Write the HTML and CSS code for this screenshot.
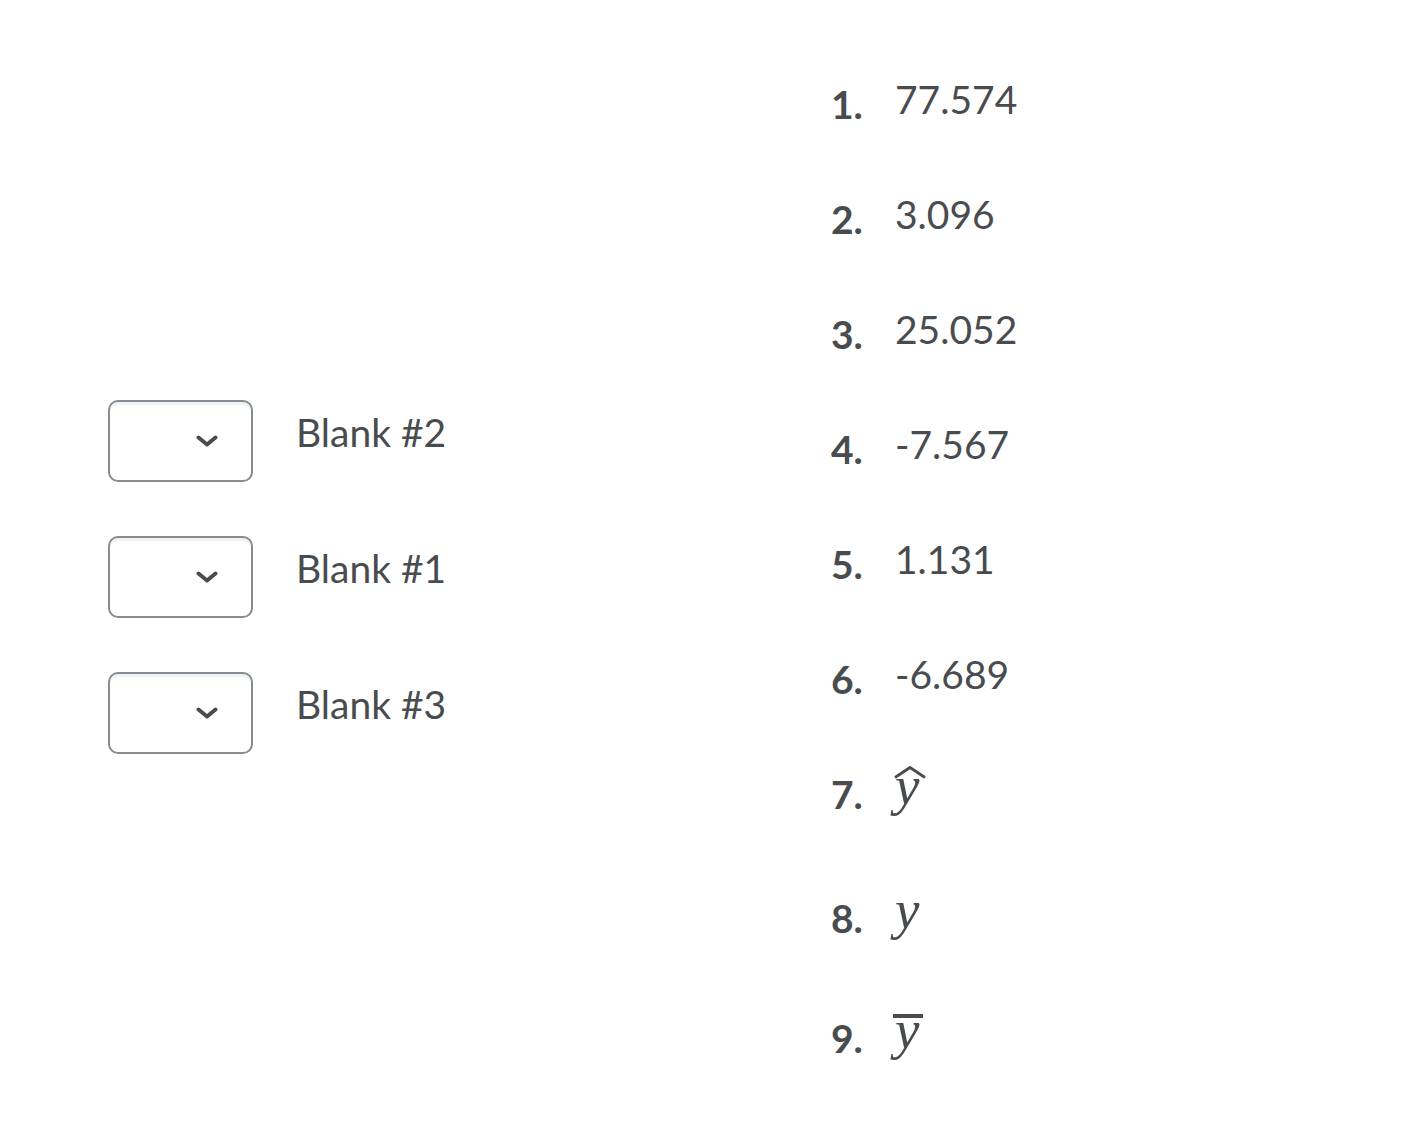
FILE: index.html
```html
<!DOCTYPE html>
<html lang="en">
<head>
<meta charset="utf-8">
<link rel="stylesheet" href="styles.css">
</head>
<body>
<div class="page">
  <div class="blanks">
    <div class="blank-row">
      <div class="select"><svg class="chev" viewBox="0 0 22 12" width="22" height="12"><path d="M2.5 2.5 L11 9.5 L19.5 2.5" fill="none" stroke="#494c4e" stroke-width="4" stroke-linecap="round" stroke-linejoin="round"/></svg></div>
      <span class="label">Blank #2</span>
    </div>
    <div class="blank-row">
      <div class="select"><svg class="chev" viewBox="0 0 22 12" width="22" height="12"><path d="M2.5 2.5 L11 9.5 L19.5 2.5" fill="none" stroke="#494c4e" stroke-width="4" stroke-linecap="round" stroke-linejoin="round"/></svg></div>
      <span class="label">Blank #1</span>
    </div>
    <div class="blank-row">
      <div class="select"><svg class="chev" viewBox="0 0 22 12" width="22" height="12"><path d="M2.5 2.5 L11 9.5 L19.5 2.5" fill="none" stroke="#494c4e" stroke-width="4" stroke-linecap="round" stroke-linejoin="round"/></svg></div>
      <span class="label">Blank #3</span>
    </div>
  </div>
  <ol class="choices">
    <li><span class="num">1.</span><span class="val">77.574</span></li>
    <li><span class="num">2.</span><span class="val">3.096</span></li>
    <li><span class="num">3.</span><span class="val">25.052</span></li>
    <li><span class="num">4.</span><span class="val">-7.567</span></li>
    <li><span class="num">5.</span><span class="val">1.131</span></li>
    <li><span class="num">6.</span><span class="val">-6.689</span></li>
    <li class="row-hat"><span class="num">7.</span><span class="math">y<svg class="hat" viewBox="0 0 34 14" width="34" height="14"><path d="M2 12.5 L17 2.5 L32 12.5" fill="none" stroke="#494c4e" stroke-width="2.8" stroke-linejoin="miter"/></svg></span></li>
    <li class="row-plain"><span class="num">8.</span><span class="math">y</span></li>
    <li class="row-bar"><span class="num">9.</span><span class="math">y<span class="bar"></span></span></li>
  </ol>
</div>
</body>
</html>
```

FILE: styles.css
```css
html, body {
  margin: 0;
  padding: 0;
  background: #ffffff;
}
body {
  font-family: Lato, "Open Sans", sans-serif;
  color: #494c4e;
  width: 1406px;
  height: 1144px;
  overflow: hidden;
}
.page {
  display: flex;
  align-items: flex-start;
}
.blanks {
  width: 831px;
  box-sizing: border-box;
  padding: 400px 0 0 108px;
  display: flex;
  flex-direction: column;
  gap: 54px;
}
.blank-row {
  display: flex;
  align-items: flex-start;
  gap: 43px;
}
.select {
  width: 145px;
  height: 82px;
  box-sizing: border-box;
  border: 2px solid #868c8f;
  border-radius: 10px;
  box-shadow: inset 0 4px 0 -1px #f1f2f3;
  background: #fff;
  display: flex;
  align-items: center;
  justify-content: flex-end;
  padding-right: 33px;
}
.chev {
  display: block;
}
.label {
  font-size: 39px;
  line-height: 46px;
  margin-top: 9px;
}
.choices {
  list-style: none;
  margin: 44px 0 0 0;
  padding: 0;
}
.choices li {
  font-size: 39px;
  line-height: 110px;
  white-space: nowrap;
}
.num {
  display: inline-block;
  width: 64px;
  font-weight: 700;
  vertical-align: -5px;
}
.val {
  font-weight: 400;
}
.math {
  font-family: "Liberation Serif", "DejaVu Serif", serif;
  font-style: italic;
  font-size: 55px;
  position: relative;
  display: inline-block;
  line-height: 1;
}
.choices li.row-plain { margin-top: 9px; }
.choices li.row-bar { margin-top: 5px; }
.hat {
  position: absolute;
  left: -2px;
  top: 7px;
  display: block;
}
.bar {
  position: absolute;
  left: -2px;
  top: 12px;
  width: 30px;
  height: 4px;
  background: #494c4e;
}
```
